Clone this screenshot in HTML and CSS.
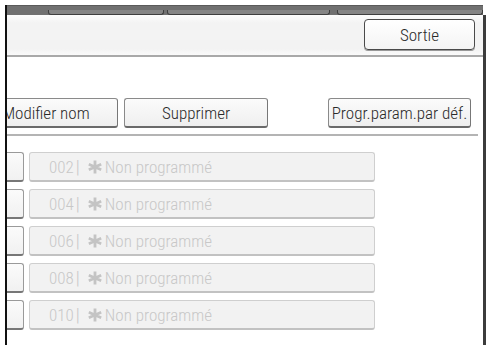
FILE: index.html
```html
<!DOCTYPE html>
<html>
<head>
<meta charset="utf-8">
<link rel="stylesheet" href="styles.css">
</head>
<body>
<div class="screen">
  <div class="frame">
    <div class="tabs">
      <div class="tab tab1"></div>
      <div class="tab tab2"></div>
      <div class="tab tab3"></div>
    </div>
    <div class="panel">
      <div class="header">
        <div class="btn exit">Sortie</div>
      </div>
      <div class="content">
        <div class="actions">
          <div class="btn act modify">Modifier nom</div>
          <div class="btn act delete">Supprimer</div>
          <div class="btn act defaults">Progr.param.par déf.</div>
        </div>
        <div class="sep"></div>
        <div class="rows">
          <div class="row"><div class="key"></div><div class="slot"><span class="num">002</span><span class="bar">|</span><svg class="star" viewBox="0 0 14 14"><path d="M7 0.5V13.5M0.8 4.3L13.2 9.7M0.8 9.7L13.2 4.3"/></svg><span class="label">Non programmé</span></div></div>
          <div class="row"><div class="key"></div><div class="slot"><span class="num">004</span><span class="bar">|</span><svg class="star" viewBox="0 0 14 14"><path d="M7 0.5V13.5M0.8 4.3L13.2 9.7M0.8 9.7L13.2 4.3"/></svg><span class="label">Non programmé</span></div></div>
          <div class="row"><div class="key"></div><div class="slot"><span class="num">006</span><span class="bar">|</span><svg class="star" viewBox="0 0 14 14"><path d="M7 0.5V13.5M0.8 4.3L13.2 9.7M0.8 9.7L13.2 4.3"/></svg><span class="label">Non programmé</span></div></div>
          <div class="row"><div class="key"></div><div class="slot"><span class="num">008</span><span class="bar">|</span><svg class="star" viewBox="0 0 14 14"><path d="M7 0.5V13.5M0.8 4.3L13.2 9.7M0.8 9.7L13.2 4.3"/></svg><span class="label">Non programmé</span></div></div>
          <div class="row"><div class="key"></div><div class="slot"><span class="num">010</span><span class="bar">|</span><svg class="star" viewBox="0 0 14 14"><path d="M7 0.5V13.5M0.8 4.3L13.2 9.7M0.8 9.7L13.2 4.3"/></svg><span class="label">Non programmé</span></div></div>
        </div>
      </div>
    </div>
  </div>
</div>
</body>
</html>
```

FILE: styles.css
```css
* { box-sizing: border-box; }
html, body { margin: 0; padding: 0; background: #fff; }
body { font-family: "Liberation Sans Narrow", "Roboto Condensed", "DejaVu Sans Condensed", sans-serif; }

.screen {
  width: 490px;
  height: 345px;
  overflow: hidden;
  padding: 5px 0 0 5px;
  background: #fff;
}

.frame {
  width: 481px;
  height: 340px;
  border-left: 2px solid #111;
  display: flex;
  flex-direction: column;
}

.tabs {
  width: 476px;
  height: 10px;
  min-height: 10px;
  flex: none;
  background-color: #707070;
  display: flex;
  align-items: flex-end;
  padding-left: 41px;
  gap: 3px;
  border-top: 1px solid #5a5a5a;
}
.tab {
  height: 5px;
  background-color: #858585;
  border: 1px solid #3e3e3e;
  border-top: none;
  border-radius: 0 0 3px 3px;
}
.tab1 { width: 117px; }
.tab2 { width: 165px; }
.tab3 { width: 148px; margin-left: 4px; }

.panel {
  flex: 1;
  border-right: 3px solid #3c3c3c;
  display: flex;
  flex-direction: column;
  overflow: hidden;
  box-shadow: inset -1px 0 0 #999;
}

.header {
  height: 42px;
  flex: none;
  background: linear-gradient(#fcfcfc, #f3f3f3 20%, #f3f3f3 85%, #fafafa);
  border-bottom: 2px solid #a9a9a9;
  display: flex;
  justify-content: flex-end;
  align-items: flex-start;
  padding: 4px 8px 0 0;
}

.btn {
  display: flex;
  align-items: center;
  justify-content: center;
  color: #2a2a2a;
  font-size: 17px;
  font-weight: 300;
  white-space: nowrap;
}

.exit {
  width: 111px;
  height: 31px;
  border: 1.5px solid #4a4a4a;
  border-radius: 4px;
  background: linear-gradient(#ffffff, #f4f4f4);
  box-shadow: 0 1px 0 #999;
}

.content {
  flex: 1;
  background: #fff;
  padding-top: 41px;
}

.actions {
  display: flex;
  height: 30px;
  margin-left: -33px;
}
.act {
  height: 30px;
  border: 1px solid #8a8a8a;
  border-bottom: 2px solid #6a6a6a;
  border-right-color: #777;
  border-radius: 3px;
  background: linear-gradient(#fbfbfb, #efefef);
}
.modify { width: 144px; }
.delete { width: 144px; margin-left: 6px; }
.defaults { width: 143px; margin-left: 60px; }

.sep {
  width: 471px;
  height: 2px;
  margin-top: 6px;
  background: #b4b4b4;
}

.rows {
  display: flex;
  flex-direction: column;
  gap: 7px;
  margin-top: 16px;
}
.row {
  display: flex;
  height: 30px;
  margin-left: -13px;
  gap: 5px;
}
.key {
  width: 30px;
  height: 30px;
  border: 1px solid #9a9a9a;
  border-bottom: 2px solid #777;
  border-radius: 3px;
  background: linear-gradient(#fbfbfb, #f1f1f1);
}
.slot {
  width: 346px;
  height: 30px;
  border: 1px solid #cfcfcf;
  border-bottom: 2px solid #c2c2c2;
  border-radius: 3px;
  background: #f2f2f2;
  display: flex;
  align-items: center;
  padding-left: 19px;
  color: #c8c8c8;
  font-weight: 300;
}
.num {
  font-size: 17px;
}
.bar {
  font-size: 18px;
  margin-left: 2px;
}
.star {
  width: 14px;
  height: 14px;
  margin-left: 8px;
  stroke: #c4c4c4;
  stroke-width: 2.8;
  fill: none;
}
.label {
  font-size: 17px;
  margin-left: 3px;
}
```
